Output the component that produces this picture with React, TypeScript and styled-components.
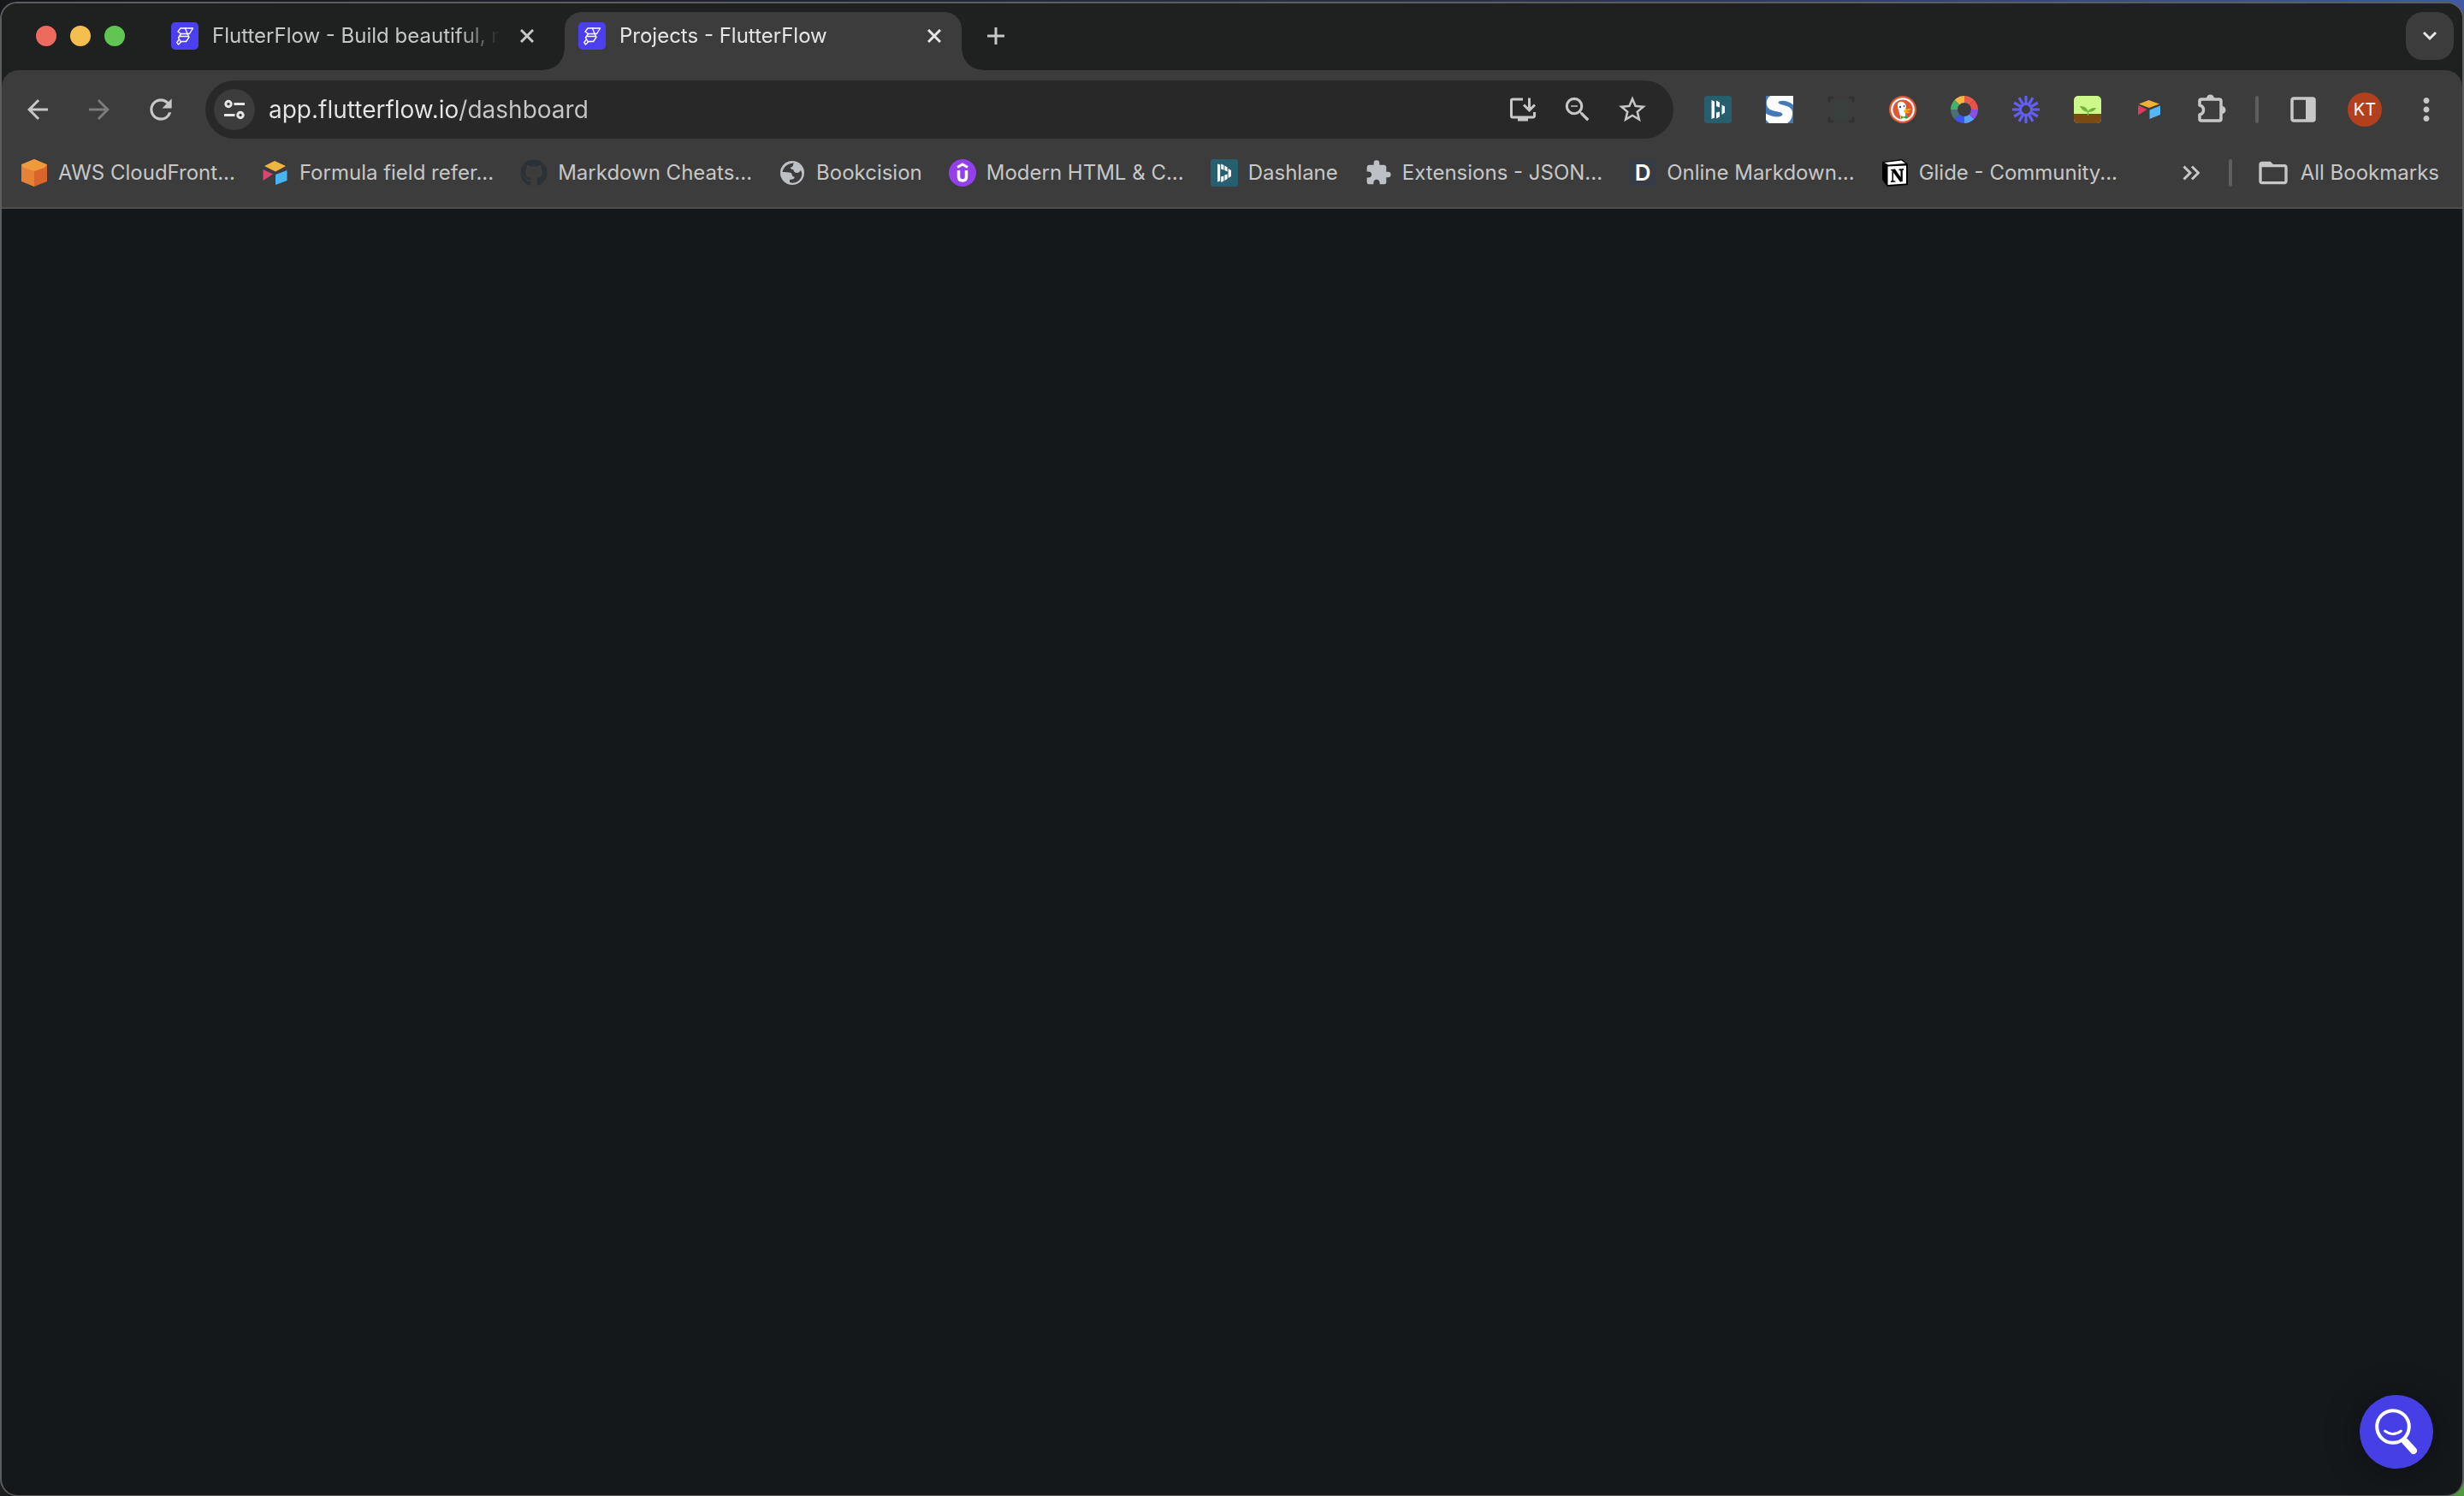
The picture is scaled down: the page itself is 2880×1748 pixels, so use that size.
import React from "react";
import styled, { createGlobalStyle, css } from "styled-components";
import {
  MdArrowBack,
  MdArrowForward,
  MdExtension,
  MdFolderOpen,
  MdInstallDesktop,
  MdMoreVert,
  MdRefresh,
  MdStarBorder,
  MdZoomOut,
} from "react-icons/md";
import { FaGithub } from "react-icons/fa";

const color = {
  strip: "#1f2120",
  bar: "#3c3c3c",
  field: "#282828",
  page: "#14181b",
  edge: "#5c5e5e",
  line: "#4c4f4d",
  text: "#c7c7c7",
  bright: "#e6e6e6",
  muted: "#7b7b7b",
};

const GlobalStyle = createGlobalStyle`
  *, *::before, *::after { box-sizing: border-box; }
  body {
    margin: 0;
    background: #0b0c0e;
    font-family: Inter, "Liberation Sans", sans-serif;
  }
  button, input { font: inherit; }
`;

const Desktop = styled.div`
  display: flex;
  min-height: 100vh;
  padding-top: 2px;
  background:
    linear-gradient(#4f9a3c, #4f9a3c) right bottom / 24px 24px no-repeat,
    linear-gradient(90deg, #16171b, #2b3046 60%, #3f59a8) top / 100% 24px no-repeat,
    #1c1d1f;
`;

const Window = styled.div`
  flex: 1;
  min-width: 0;
  display: flex;
  flex-direction: column;
  overflow: hidden;
  border: 2px solid ${color.edge};
  border-bottom-width: 1px;
  border-radius: 20px;
  background: ${color.page};
`;

const Chrome = styled.header`
  background: ${color.strip};
`;

const iconButton = css`
  display: grid;
  place-items: center;
  flex: none;
  padding: 0;
  border: 0;
  background: none;
  color: ${color.text};
  cursor: pointer;
`;

const TabStrip = styled.div`
  display: flex;
  gap: 12px;
  padding: 10px 10px 0 40px;
`;

const Lights = styled.div`
  display: flex;
  align-items: center;
  gap: 16px;
  height: 56px;
  margin-right: 26px;
`;

const Light = styled.button<{ $fill: string }>`
  width: 24px;
  height: 24px;
  padding: 0;
  border: 0;
  border-radius: 50%;
  background: ${(p) => p.$fill};
`;

const Tabs = styled.div`
  display: flex;
  gap: 12px;
`;

const Tab = styled.div<{ $active?: boolean }>`
  position: relative;
  display: flex;
  align-items: center;
  gap: 16px;
  width: 464px;
  padding: 0 16px 12px;
  border-radius: 20px 20px 0 0;
  color: ${(p) => (p.$active ? color.bright : color.text)};
  ${(p) =>
    p.$active &&
    css`
      background: ${color.bar};
      &::before,
      &::after {
        content: "";
        position: absolute;
        bottom: 0;
        width: 24px;
        height: 24px;
      }
      &::before {
        right: 100%;
        background: radial-gradient(circle at 0 0, transparent 23px, ${color.bar} 24px);
      }
      &::after {
        left: 100%;
        background: radial-gradient(circle at 100% 0, transparent 23px, ${color.bar} 24px);
      }
    `}
`;

const TabTitle = styled.span`
  flex: 1;
  overflow: hidden;
  white-space: nowrap;
  font-size: 24px;
  line-height: 56px;
  mask-image: linear-gradient(90deg, #000 calc(100% - 48px), transparent);
`;

const CloseButton = styled.button`
  ${iconButton}
  width: 32px;
  height: 32px;
  color: inherit;
`;

const StripButton = styled.button<{ $filled?: boolean }>`
  ${iconButton}
  width: 56px;
  height: 56px;
  margin-bottom: 12px;
  margin-left: ${(p) => (p.$filled ? "auto" : 0)};
  border-radius: 20px;
  background: ${(p) => (p.$filled ? color.bar : "none")};
  color: ${(p) => (p.$filled ? color.bright : color.text)};
`;

const Bars = styled.div`
  border-bottom: 2px solid ${color.line};
  border-radius: 20px 20px 0 0;
  background: ${color.bar};
`;

const Toolbar = styled.div`
  display: flex;
  align-items: center;
  gap: 24px;
  padding: 12px 14px 0 14px;
`;

const ButtonGroup = styled.div<{ $gap?: number }>`
  display: flex;
  align-items: center;
  gap: ${(p) => p.$gap ?? 16}px;
`;

const ToolButton = styled.button`
  ${iconButton}
  width: 56px;
  height: 56px;
  &:disabled {
    color: ${color.muted};
  }
`;

const Omnibox = styled.form`
  flex: 1;
  min-width: 0;
  display: flex;
  align-items: center;
  gap: 16px;
  height: 68px;
  padding: 0 20px 0 10px;
  border-radius: 34px;
  background: ${color.field};
`;

const SiteButton = styled.button`
  ${iconButton}
  width: 48px;
  height: 48px;
  border-radius: 50%;
  background: ${color.bar};
  color: ${color.bright};
`;

const Address = styled.input`
  flex: 1;
  min-width: 0;
  height: 48px;
  padding: 0;
  border: 0;
  outline: 0;
  font-size: 28px;
  color: ${color.bright};
  background: linear-gradient(90deg, ${color.bright} 224px, ${color.text} 224px);
  background-clip: text;
  -webkit-text-fill-color: transparent;
`;

const Divider = styled.div`
  flex: none;
  width: 4px;
  height: 32px;
  border-radius: 2px;
  background: #5e5e5e;
`;

const Avatar = styled.span`
  display: grid;
  place-items: center;
  width: 40px;
  height: 40px;
  border-radius: 50%;
  background: #b3401c;
  color: #fff;
  font-size: 20px;
`;

const BookmarksBar = styled.nav`
  display: flex;
  align-items: center;
  gap: 28px;
  height: 80px;
  padding: 0 27px 0 22px;
  font-size: 24px;
  line-height: 32px;
`;

const BookmarkList = styled.ul`
  flex: 1;
  min-width: 0;
  display: flex;
  gap: 31px;
  margin: 0;
  padding: 0;
  list-style: none;
  overflow: hidden;
`;

const Bookmark = styled.a`
  display: flex;
  align-items: center;
  gap: 12px;
  color: ${color.text};
  text-decoration: none;
  white-space: nowrap;
`;

const OverflowButton = styled.button`
  ${iconButton}
  width: 32px;
  height: 32px;
`;

const AllBookmarks = styled.button`
  ${iconButton}
  display: flex;
  align-items: center;
  gap: 12px;
`;

const Page = styled.main`
  position: relative;
  flex: 1;
`;

const HelpButton = styled.button`
  ${iconButton}
  position: absolute;
  right: 34px;
  bottom: 31px;
  width: 86px;
  height: 86px;
  border-radius: 50%;
  background: #473fe6;
  color: #fff;
  box-shadow: 0 4px 40px rgba(0, 0, 0, 0.35);
`;

const FlutterFlowIcon = () => (
  <svg width="32" height="32" viewBox="0 0 32 32" fill="none" aria-hidden="true">
    <rect width="32" height="32" rx="5" fill="#4b3ff0" />
    <g stroke="#fff" strokeWidth="1.4" strokeLinejoin="round" strokeLinecap="round">
      <path d="M11 7H25.500L21.500 13.500H11.500L8 11Z" />
      <path d="M16.500 7L19 13.500" />
      <path d="M11.500 13.500L8.500 18L11 22.500H17.500L21 17.500L19 13.500" />
      <path d="M9.500 16.500H20.500" />
      <path d="M9.500 20L6.800 23.500L8.500 26L12 22.500" />
    </g>
  </svg>
);

const CloseIcon = () => (
  <svg width="16" height="16" viewBox="0 0 16 16" stroke="currentColor" strokeWidth="3" aria-hidden="true">
    <path d="M1 1L15 15M15 1L1 15" />
  </svg>
);

const PlusIcon = () => (
  <svg width="20" height="20" viewBox="0 0 20 20" stroke="currentColor" strokeWidth="3" aria-hidden="true">
    <path d="M10 0V20M0 10H20" />
  </svg>
);

const ChevronIcon = () => (
  <svg width="20" height="20" viewBox="0 0 20 20" fill="none" stroke="currentColor" strokeWidth="3" aria-hidden="true">
    <path d="M3 6L10 13L17 6" />
  </svg>
);

const SiteSettingsIcon = () => (
  <svg width="28" height="28" viewBox="0 0 28 28" fill="none" stroke="currentColor" strokeWidth="3" aria-hidden="true">
    <circle cx="7" cy="7.500" r="3.200" />
    <path d="M13.500 7.500H26M2 20.500H14.500" />
    <circle cx="21" cy="20.500" r="3.200" />
  </svg>
);

const DashlaneIcon = ({ striped }: { striped?: boolean }) => (
  <svg width="32" height="32" viewBox="0 0 32 32" aria-hidden="true">
    <rect width="32" height="32" rx="3" fill="#285f6e" />
    {striped ? (
      <path
        d="M8 5.500L11.200 6.500V25.500L8 26.500ZM12.200 5.500L15.400 7V12.500L12.200 11.500ZM16.400 7.500L19.600 9.500V14.500L16.400 13ZM20.600 11L24 13V20L20.600 22ZM16.400 18.500L19.600 17.500V23L16.400 25ZM12.200 20.500L15.400 19.500V25.500L12.200 27Z"
        fill="#fff"
      />
    ) : (
      <path
        d="M8.500 5L12 6.500V25.500L8.500 27ZM14 5.500L18 7.500V13.500L14 12ZM14 19.500L18 18.500V24.500L14 26.500ZM20.500 10.500L24 12.500V19.500L20.500 22Z"
        fill="#fff"
      />
    )}
  </svg>
);

const StylusIcon = () => (
  <svg width="32" height="32" viewBox="0 0 32 32" aria-hidden="true">
    <rect width="32" height="32" fill="#fff" />
    <path d="M10 0H32V10.500C27 5.500 15 4 14.500 8C15 11.500 31 10 31 19.500C31 26 29 29 25 32H32V0Z" fill="#447ab8" />
    <path d="M23 0H30L31 7C29 4 27 2 23 0Z" fill="#fff" />
    <path d="M0 0H5C1 3 0 8 1.500 12C5 20 19 17 19.500 21.500C19 26 7 25 0 20.500Z" fill="#447ab8" />
    <path d="M0 28V32H4Z" fill="#447ab8" />
  </svg>
);

const ScanIcon = () => (
  <svg width="32" height="32" viewBox="0 0 32 32" fill="none" aria-hidden="true">
    <path d="M8 7L16 4L24 7V25L16 30L8 25Z" fill="#39413e" />
    <path d="M2 7V2H7M25 2H30V7M30 25V30H25M7 30H2V25" stroke="#303333" strokeWidth="3" />
  </svg>
);

const DuckIcon = () => (
  <svg width="32" height="32" viewBox="0 0 32 32" aria-hidden="true">
    <circle cx="16" cy="16" r="16" fill="#de5833" />
    <circle cx="16" cy="16" r="12.700" fill="none" stroke="#fff" strokeWidth="2.200" />
    <path d="M10 10C10.500 5.500 18 5.500 19.500 10.500C20.500 14 18.500 17 19 21L20 27C17.500 28.500 15 28 13.500 27C13 20 9.500 15 10 10Z" fill="#fff" />
    <circle cx="13" cy="13" r="1.200" fill="#2d4f8e" />
    <circle cx="17.500" cy="12" r="0.900" fill="#2d4f8e" />
    <path d="M17 17C20 15 23 15.500 25.500 15C26 17 21 17 19.500 18C22 19 24 18 24 19C23 21 17 20.500 17 17Z" fill="#fdb515" />
    <path d="M13.500 23L17 24.500L21 22.500V27L17 25.500L14 27Z" fill="#43a047" />
  </svg>
);

const wheel = ["#ea5b4a", "#e8524b", "#8a4fe8", "#5aa0f5", "#3f55ee", "#4d6f78", "#45b06c", "#f5b942"];

const WheelIcon = () => (
  <svg width="32" height="32" viewBox="0 0 32 32" fill="none" strokeWidth="8" aria-hidden="true">
    {wheel.map((stroke, i) => (
      <circle
        key={i}
        cx="16"
        cy="16"
        r="12"
        pathLength={8}
        stroke={stroke}
        strokeDasharray="1 7"
        transform={`rotate(${i * 45 - 90} 16 16)`}
      />
    ))}
  </svg>
);

const BurstIcon = () => (
  <svg width="32" height="32" viewBox="0 0 32 32" stroke="#625df5" aria-hidden="true">
    <circle cx="16" cy="16" r="6.500" fill="none" strokeWidth="3" />
    {Array.from({ length: 12 }, (_, i) => (
      <path key={i} d="M16 0V9" strokeWidth="3.200" transform={`rotate(${i * 30} 16 16)`} />
    ))}
  </svg>
);

const SproutIcon = () => (
  <svg width="32" height="32" viewBox="0 0 32 32" aria-hidden="true">
    <rect width="32" height="32" rx="5" fill="#cdf788" />
    <path d="M0 21H32V27A5 5 0 0 1 27 32H5A5 5 0 0 1 0 27Z" fill="#7a4a12" />
    <path
      d="M7 12C12 12 15.500 14 16.500 18C18.500 15 22 13.500 26 14C24 18 20.500 19 17.200 18.800V23H15.800V18.500C12 18.500 9 16 7 12Z"
      fill="#79ad3c"
    />
  </svg>
);

const AirtableIcon = ({ tall }: { tall?: boolean }) => (
  <svg width="32" height="32" viewBox="0 0 32 32" aria-hidden="true">
    {tall ? (
      <>
        <path d="M15 2L28 8L16 14.500L3 8Z" fill="#f0b440" />
        <path d="M1.500 12L13 17.500L1.500 25Z" fill="#dc4473" />
        <path d="M16 18L29.500 13V25L16 30Z" fill="#49b4f2" />
      </>
    ) : (
      <>
        <path d="M15.500 5L28 9.500L16 14L4 9.500Z" fill="#f2b134" />
        <path d="M3 11L13.500 16L3 22.500Z" fill="#e03a63" />
        <path d="M16.500 16.500L29 11.500V22L16.500 27Z" fill="#54b8f5" />
      </>
    )}
  </svg>
);

const PuzzleIcon = () => (
  <svg width="36" height="36" viewBox="0 0 36 36" fill="none" aria-hidden="true">
    <path
      d="M5 8Q5 6 7 6H28Q30 6 30 8V29Q30 31 28 31H7Q5 31 5 29V24Q9.500 23 9.500 18.500Q9.500 14 5 13Z"
      stroke="currentColor"
      strokeWidth="3.500"
      strokeLinejoin="round"
    />
    <path d="M13 5A4.500 4.500 0 0 1 22 5ZM31 14A4.500 4.500 0 0 1 31 23Z" fill="currentColor" />
  </svg>
);

const PanelIcon = () => (
  <svg width="30" height="30" viewBox="0 0 30 30" fill="none" aria-hidden="true">
    <rect x="2" y="2" width="26" height="26" rx="2" stroke="currentColor" strokeWidth="3.500" />
    <path d="M18 2H28V28H18Z" fill="currentColor" />
  </svg>
);

const AwsIcon = () => (
  <svg width="32" height="32" viewBox="0 0 32 32" aria-hidden="true">
    <path d="M16 0L31 6V26L16 32Z" fill="#d9642c" />
    <path d="M16 0L1 6V26L16 32Z" fill="#e68236" />
    <path d="M16 0L31 6.500L28 10L16 14L4 10L1 6.500Z" fill="#f09a3e" />
  </svg>
);

const GlobeIcon = () => (
  <svg width="32" height="32" viewBox="0 0 32 32" aria-hidden="true">
    <circle cx="16" cy="16" r="14" fill="#bdc1c6" />
    <path
      d="M18 4.500C12 4.500 6 8 4.500 15C8 15.500 11.500 15 14.500 16C16.500 17.500 15 20 18 20.500C19.500 21 18 23 16.500 23.500L13 24V27C18 29 24 26.500 26.500 21C28 18 27 14.500 26 13C24.500 15.500 22 16.500 19.500 15.500C17 14.500 18.500 12.500 16.500 12C14 11.500 13 10 15.500 9C17.500 8.500 16.500 6.500 18 4.500Z"
      fill="#3c3c3c"
    />
  </svg>
);

const UdemyIcon = () => (
  <svg width="32" height="32" viewBox="0 0 32 32" fill="none" aria-hidden="true">
    <circle cx="16" cy="16" r="16" fill="#9340ea" />
    <path d="M10 9.500L16 6L22 9.500" stroke="#fff" strokeWidth="3" />
    <path d="M11.500 13V20.500Q11.500 25 16 25Q20.500 25 20.500 20.500V13" stroke="#fff" strokeWidth="3.500" />
  </svg>
);

const LetterTile = styled.span`
  display: grid;
  place-items: center;
  width: 32px;
  height: 32px;
  background: #373b46;
  color: #fff;
  font-size: 26px;
  font-weight: 600;
`;

const NotionIcon = () => (
  <svg width="32" height="32" viewBox="0 0 32 32" aria-hidden="true">
    <path d="M1 3L24 0L31 5.500V30L7 32L1 24Z" fill="#000" />
    <path d="M3.500 4L23.500 1.500L28 5L8 6.500Z" fill="#fff" />
    <path d="M7.500 8.500L29 7.500V28.500L7.500 30Z" fill="#fff" />
    <path
      d="M11 12L16 11.500L22.500 21V13.500L20.500 13V11.500L26 11V12.500L24.800 13V26L22 26.500L14 15.500V25L16.500 25.500V26.500L11 27V25.500L12.500 25V13.500L11 13Z"
      fill="#000"
    />
  </svg>
);

const MoreIcon = () => (
  <svg width="20" height="18" viewBox="0 0 20 18" fill="none" stroke="currentColor" strokeWidth="3" aria-hidden="true">
    <path d="M1.500 1.500L9 9L1.500 16.500M11 1.500L18.500 9L11 16.500" />
  </svg>
);

const SmileSearchIcon = () => (
  <svg width="50" height="54" viewBox="0 0 50 54" fill="none" stroke="#fff" strokeLinecap="round" aria-hidden="true">
    <circle cx="21" cy="21" r="18.800" strokeWidth="4" />
    <path d="M11.500 26Q21 33 30.500 26" strokeWidth="2.800" />
    <path d="M35 38L45 49" strokeWidth="8" />
  </svg>
);

const extensions = [
  { name: "Dashlane", icon: <DashlaneIcon /> },
  { name: "Stylus", icon: <StylusIcon /> },
  { name: "Capture", icon: <ScanIcon /> },
  { name: "DuckDuckGo", icon: <DuckIcon /> },
  { name: "Color wheel", icon: <WheelIcon /> },
  { name: "Loom", icon: <BurstIcon /> },
  { name: "Sprout", icon: <SproutIcon /> },
  { name: "Airtable", icon: <AirtableIcon /> },
];

const bookmarks = [
  { label: "AWS CloudFront...", icon: <AwsIcon /> },
  { label: "Formula field refer...", icon: <AirtableIcon tall /> },
  { label: "Markdown Cheats...", icon: <FaGithub size={32} color="#2b3137" /> },
  { label: "Bookcision", icon: <GlobeIcon /> },
  { label: "Modern HTML & C...", icon: <UdemyIcon /> },
  { label: "Dashlane", icon: <DashlaneIcon striped /> },
  { label: "Extensions - JSON...", icon: <MdExtension size={32} color="#bdc1c6" /> },
  { label: "Online Markdown...", icon: <LetterTile>D</LetterTile> },
  { label: "Glide - Community...", icon: <NotionIcon /> },
];

const tabs = [
  { title: "FlutterFlow - Build beautiful, n", active: false },
  { title: "Projects - FlutterFlow", active: true },
];

export default function App() {
  return (
    <Desktop>
      <GlobalStyle />
      <Window>
        <Chrome>
          <TabStrip>
            <Lights>
              <Light $fill="#ed6a5e" aria-label="Close window" />
              <Light $fill="#f5bf4f" aria-label="Minimize window" />
              <Light $fill="#61c554" aria-label="Zoom window" />
            </Lights>
            <Tabs>
              {tabs.map((tab) => (
                <Tab key={tab.title} $active={tab.active}>
                  <FlutterFlowIcon />
                  <TabTitle>{tab.title}</TabTitle>
                  <CloseButton aria-label="Close tab">
                    <CloseIcon />
                  </CloseButton>
                </Tab>
              ))}
            </Tabs>
            <StripButton aria-label="New tab">
              <PlusIcon />
            </StripButton>
            <StripButton $filled aria-label="Search tabs">
              <ChevronIcon />
            </StripButton>
          </TabStrip>

          <Bars>
            <Toolbar>
              <ButtonGroup>
                <ToolButton aria-label="Back">
                  <MdArrowBack size={36} />
                </ToolButton>
                <ToolButton aria-label="Forward" disabled>
                  <MdArrowForward size={36} />
                </ToolButton>
                <ToolButton aria-label="Reload">
                  <MdRefresh size={38} />
                </ToolButton>
              </ButtonGroup>

              <Omnibox>
                <SiteButton type="button" aria-label="View site information">
                  <SiteSettingsIcon />
                </SiteButton>
                <Address aria-label="Address" defaultValue="app.flutterflow.io/dashboard" />
                <ButtonGroup $gap={8}>
                  <ToolButton type="button" aria-label="Install app">
                    <MdInstallDesktop size={36} />
                  </ToolButton>
                  <ToolButton type="button" aria-label="Zoom">
                    <MdZoomOut size={38} />
                  </ToolButton>
                  <ToolButton type="button" aria-label="Bookmark this tab">
                    <MdStarBorder size={38} />
                  </ToolButton>
                </ButtonGroup>
              </Omnibox>

              <ButtonGroup>
                {extensions.map((ext) => (
                  <ToolButton key={ext.name} aria-label={ext.name}>
                    {ext.icon}
                  </ToolButton>
                ))}
                <ToolButton aria-label="Extensions">
                  <PuzzleIcon />
                </ToolButton>
              </ButtonGroup>
              <Divider />
              <ButtonGroup>
                <ToolButton aria-label="Side panel">
                  <PanelIcon />
                </ToolButton>
                <ToolButton aria-label="Profile">
                  <Avatar>KT</Avatar>
                </ToolButton>
                <ToolButton aria-label="Menu">
                  <MdMoreVert size={42} />
                </ToolButton>
              </ButtonGroup>
            </Toolbar>

            <BookmarksBar aria-label="Bookmarks">
              <BookmarkList>
                {bookmarks.map((item) => (
                  <li key={item.label}>
                    <Bookmark href="#">
                      {item.icon}
                      <span>{item.label}</span>
                    </Bookmark>
                  </li>
                ))}
              </BookmarkList>
              <OverflowButton aria-label="More bookmarks">
                <MoreIcon />
              </OverflowButton>
              <Divider />
              <AllBookmarks>
                <MdFolderOpen size={40} />
                <span>All Bookmarks</span>
              </AllBookmarks>
            </BookmarksBar>
          </Bars>
        </Chrome>

        <Page>
          <HelpButton aria-label="Help">
            <SmileSearchIcon />
          </HelpButton>
        </Page>
      </Window>
    </Desktop>
  );
}
